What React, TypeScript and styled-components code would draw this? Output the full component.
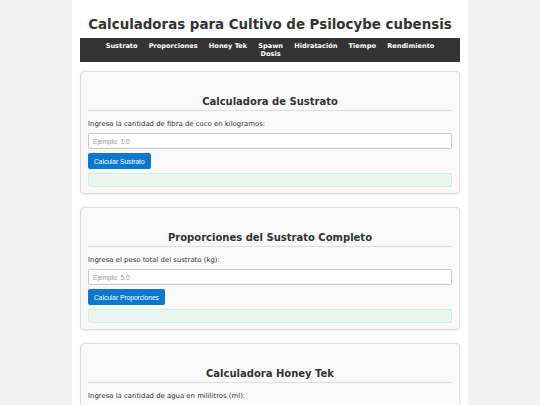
import React from "react";
import styled, { createGlobalStyle } from "styled-components";

const Global = createGlobalStyle`
  html, body { margin: 0; padding: 0; }
  body {
    background: #f2f2f2;
    font-family: "DejaVu Sans", Verdana, sans-serif;
    color: #333;
  }
`;

const Container = styled.div`
  width: 380px;
  margin: 0 auto;
  background: #fff;
  padding: 8px 8px 20px;
  min-height: 400px;
`;

const Title = styled.h1`
  margin: 9px 0 5px;
  font-size: 13.4px;
  line-height: 16px;
  font-weight: bold;
  text-align: center;
  color: #333;
`;

const Nav = styled.nav`
  background: #333;
  display: flex;
  justify-content: center;
  padding: 4px 0;
`;

const NavItem = styled.a`
  color: #fff;
  font-size: 6.6px;
  line-height: 8px;
  font-weight: bold;
  text-align: center;
  padding: 0 5.6px;
  text-decoration: none;
`;

const Card = styled.section`
  margin-top: 9px;
  margin-bottom: 13px;
  background: #f9f9f9;
  border: 1px solid #ddd;
  border-radius: 4px;
  box-shadow: 0 1px 2px rgba(0, 0, 0, 0.08);
  padding: 23px 7px 6px;
  & + & { margin-top: 0; }
`;

const CardTitle = styled.h2`
  margin: 0;
  padding-bottom: 2px;
  font-size: 10px;
  line-height: 13px;
  font-weight: bold;
  text-align: center;
  color: #333;
  border-bottom: 1px solid #ddd;
`;

const Label = styled.label`
  display: block;
  margin-top: 9px;
  font-size: 6.9px;
  line-height: 8px;
  color: #333;
`;

const Input = styled.input`
  display: block;
  box-sizing: border-box;
  width: 100%;
  height: 16px;
  margin-top: 5px;
  padding: 0 4px;
  border: 1px solid #c8c8c8;
  border-radius: 2px;
  background: #fff;
  font-family: "Liberation Sans", Arial, sans-serif;
  font-size: 6.6px;
  color: #333;
  &::placeholder { color: #999; }
`;

const Button = styled.button`
  display: block;
  height: 16px;
  margin-top: 4px;
  padding: 0 6px;
  border: none;
  border-radius: 2px;
  background: #0a78cf;
  color: #fff;
  font-family: "Liberation Sans", Arial, sans-serif;
  font-size: 6.6px;
`;

const Result = styled.div`
  margin-top: 4px;
  height: 14px;
  box-sizing: border-box;
  background: #e9f7ee;
  border: 1px solid #d4eedc;
  border-radius: 2px;
`;

const navItems: React.ReactNode[] = [
  "Sustrato",
  "Proporciones",
  "Honey Tek",
  <>Spawn<br />Dosis</>,
  "Hidratación",
  "Tiempo",
  "Rendimiento",
];

const cards = [
  {
    title: "Calculadora de Sustrato",
    label: "Ingresa la cantidad de fibra de coco en kilogramos:",
    placeholder: "Ejemplo: 1.0",
    button: "Calcular Sustrato",
  },
  {
    title: "Proporciones del Sustrato Completo",
    label: "Ingresa el peso total del sustrato (kg):",
    placeholder: "Ejemplo: 5.0",
    button: "Calcular Proporciones",
  },
  {
    title: "Calculadora Honey Tek",
    label: "Ingresa la cantidad de agua en mililitros (ml):",
    placeholder: "Ejemplo: 500",
    button: "Calcular Honey Tek",
  },
];

export default function App() {
  return (
    <>
      <Global />
      <Container>
        <Title>Calculadoras para Cultivo de Psilocybe cubensis</Title>
        <Nav>
          {navItems.map((n, i) => (
            <NavItem key={i} href="#">{n}</NavItem>
          ))}
        </Nav>
        {cards.map((c) => (
          <Card key={c.title}>
            <CardTitle>{c.title}</CardTitle>
            <Label>{c.label}</Label>
            <Input placeholder={c.placeholder} />
            <Button>{c.button}</Button>
            <Result />
          </Card>
        ))}
      </Container>
    </>
  );
}
